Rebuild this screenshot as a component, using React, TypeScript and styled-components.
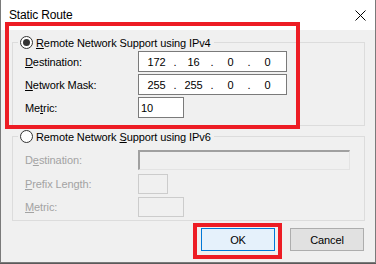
import React from 'react';
import styled, { createGlobalStyle } from 'styled-components';

const GlobalStyle = createGlobalStyle`
  html, body {
    margin: 0;
    padding: 0;
    background: #5a5a5a;
  }
  * {
    box-sizing: border-box;
  }
`;

const Window = styled.div`
  position: relative;
  width: 376px;
  height: 263px;
  display: flex;
  flex-direction: column;
  background: #f0f0f0;
  border: 1px solid #7a7a7a;
  border-top: none;
  font-family: 'Liberation Sans', Arial, sans-serif;
  font-size: 11px;
  letter-spacing: -0.1px;
  color: #000;
`;

const TitleBar = styled.div`
  height: 30px;
  flex: none;
  display: flex;
  align-items: center;
  justify-content: space-between;
  padding: 0 9px 0 8px;
  background: #fff;
  font-size: 12px;
  letter-spacing: -0.15px;
`;

const CloseIcon = styled.svg`
  width: 11px;
  height: 11px;
  display: block;
`;

const Body = styled.div`
  flex: 1;
  display: flex;
  flex-direction: column;
  padding: 12px 10px 0 11px;
`;

const GroupBox = styled.div<{ $top: number; $pad: number }>`
  margin-top: ${(p) => p.$top}px;
  border: 1px solid #dcdcdc;
  padding: 0 0 ${(p) => p.$pad}px 12px;
`;

const Legend = styled.label`
  margin: -7px 0 0 -7px;
  display: flex;
  align-items: center;
  gap: 3px;
  width: max-content;
  padding: 0 3px 0 2px;
  height: 13px;
  background: #f0f0f0;
`;

const Radio = styled.span<{ $checked?: boolean }>`
  width: 13px;
  height: 13px;
  border-radius: 50%;
  border: 1px solid #333;
  background: #fff;
  display: flex;
  align-items: center;
  justify-content: center;
  &::after {
    content: '';
    width: 7px;
    height: 7px;
    border-radius: 50%;
    background: #333;
    display: ${(p) => (p.$checked ? 'block' : 'none')};
  }
`;

const Fields = styled.div<{ $top: number; $gap: number }>`
  margin-top: ${(p) => p.$top}px;
  display: grid;
  grid-template-columns: 113px auto;
  row-gap: ${(p) => p.$gap}px;
  align-items: center;
`;

const Label = styled.span<{ $disabled?: boolean }>`
  color: ${(p) => (p.$disabled ? '#a3a3a3' : '#000')};
`;

const Key = styled.span`
  text-decoration: underline;
`;

const Input = styled.div<{ $w: number; $h: number; $disabled?: boolean }>`
  width: ${(p) => p.$w}px;
  height: ${(p) => p.$h}px;
  display: flex;
  align-items: center;
  padding-left: 2px;
  border: 1px solid ${(p) => (p.$disabled ? '#cccccc' : '#7a7a7a')};
  background: ${(p) => (p.$disabled ? '#f0f0f0' : '#fff')};
`;

const SunkenInput = styled.div<{ $w: number; $h: number }>`
  width: ${(p) => p.$w}px;
  height: ${(p) => p.$h}px;
  border-top: 2px solid #a0a0a0;
  border-left: 2px solid #a0a0a0;
  border-right: 1px solid #e3e3e3;
  border-bottom: 1px solid #e3e3e3;
  background: #f0f0f0;
`;

const Octet = styled.span`
  width: 31px;
  text-align: center;
`;

const Dot = styled.span`
  width: 6px;
  text-align: center;
`;

const ButtonRow = styled.div`
  margin-top: 7px;
  display: flex;
  justify-content: flex-end;
  gap: 15px;
  padding-right: 1px;
`;

const Button = styled.button<{ $default?: boolean }>`
  width: 74px;
  height: 23px;
  font-family: inherit;
  font-size: 11px;
  letter-spacing: -0.1px;
  color: #000;
  border: 1px solid ${(p) => (p.$default ? '#0078d7' : '#adadad')};
  background: ${(p) => (p.$default ? '#e5f1fb' : '#e1e1e1')};
  padding: 0;
`;

const Highlight = styled.div<{ $x: number; $y: number; $w: number; $h: number }>`
  position: absolute;
  left: ${(p) => p.$x}px;
  top: ${(p) => p.$y}px;
  width: ${(p) => p.$w}px;
  height: ${(p) => p.$h}px;
  border: 4px solid #ed1c24;
  pointer-events: none;
`;

const IpField: React.FC<{ parts: string[] }> = ({ parts }) => (
  <Input $w={149} $h={21}>
    {parts.map((part, i) => (
      <React.Fragment key={i}>
        {i > 0 && <Dot>.</Dot>}
        <Octet>{part}</Octet>
      </React.Fragment>
    ))}
  </Input>
);

export default function App() {
  return (
    <>
      <GlobalStyle />
      <Window>
        <TitleBar>
          <span>Static Route</span>
          <CloseIcon viewBox="0 0 11 11">
            <path d="M0.5 0.5 L10.5 10.5 M10.5 0.5 L0.5 10.5" stroke="#000" strokeWidth="1" fill="none" />
          </CloseIcon>
        </TitleBar>
        <Body>
          <GroupBox $top={0} $pad={7}>
            <Legend>
              <Radio $checked />
              <span>
                <Key>R</Key>emote Network Support using IPv4
              </span>
            </Legend>
            <Fields $top={2} $gap={2}>
              <Label>
                <Key>D</Key>estination:
              </Label>
              <IpField parts={['172', '16', '0', '0']} />
              <Label>
                <Key>N</Key>etwork Mask:
              </Label>
              <IpField parts={['255', '255', '0', '0']} />
              <Label>
                Me<Key>t</Key>ric:
              </Label>
              <Input $w={46} $h={21}>10</Input>
            </Fields>
          </GroupBox>

          <GroupBox $top={10} $pad={3}>
            <Legend>
              <Radio />
              <span>
                Remote Network <Key>S</Key>upport using IPv6
              </span>
            </Legend>
            <Fields $top={7} $gap={3.5}>
              <Label $disabled>
                D<Key>e</Key>stination:
              </Label>
              <SunkenInput $w={212} $h={20} />
              <Label $disabled>
                <Key>P</Key>refix Length:
              </Label>
              <Input $w={30} $h={20} $disabled />
              <Label $disabled>
                <Key>M</Key>etric:
              </Label>
              <Input $w={46} $h={20} $disabled />
            </Fields>
          </GroupBox>

          <ButtonRow>
            <Button $default>OK</Button>
            <Button>Cancel</Button>
          </ButtonRow>
        </Body>

        <Highlight $x={4} $y={22} $w={295} $h={107} />
        <Highlight $x={192} $y={223} $w={89} $h={36} />
      </Window>
    </>
  );
}
